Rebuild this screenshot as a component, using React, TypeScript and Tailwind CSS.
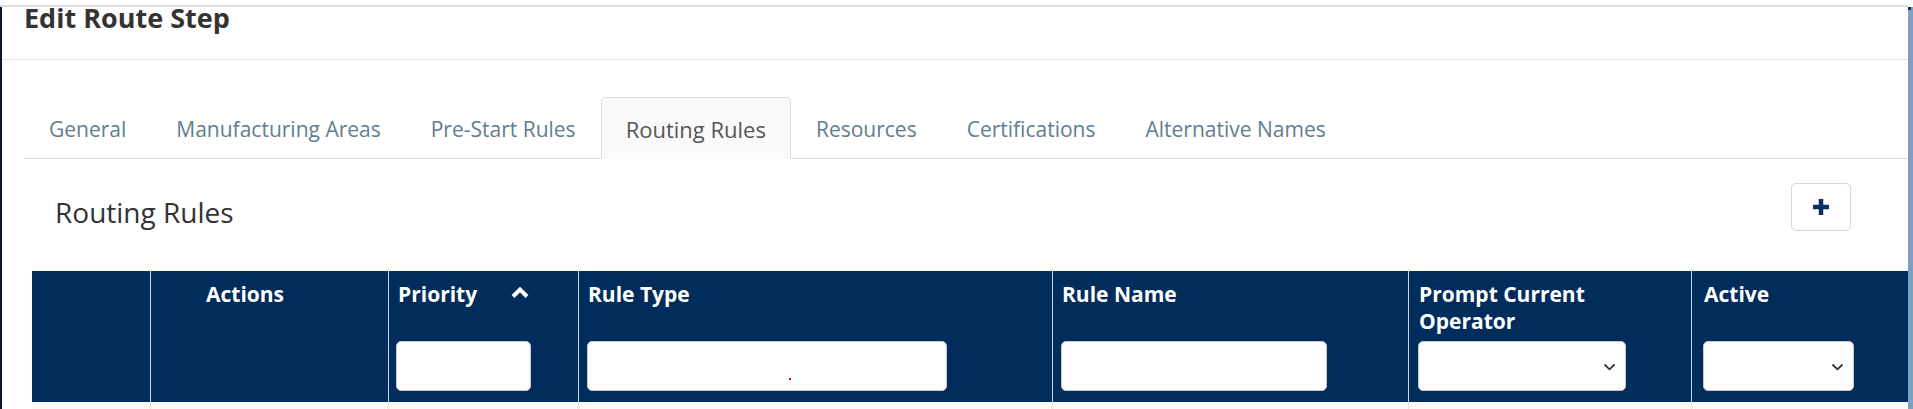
import React from "react";

const font = { fontFamily: '"Open Sans", "Liberation Sans", sans-serif' };

const tabs = [
    "General",
    "Manufacturing Areas",
    "Pre-Start Rules",
    "Routing Rules",
    "Resources",
    "Certifications",
    "Alternative Names",
];

function ChevronDown() {
    return (
        <svg width="13" height="8" viewBox="0 0 13 8" className="absolute right-[9px] top-[21px]">
            <polyline points="1.5,1.5 6.5,6.3 11.5,1.5" fill="none" stroke="#333" strokeWidth="1.8" />
        </svg>
    );
}

function TextBox({ w, dot }: { w: string; dot?: boolean }) {
    return (
        <div className={`relative h-[50px] ${w} rounded-[5px] border border-[#c8c8c8] bg-white`}>
            {/* stray red pixel seen in the reference */}
            {dot && <span className="absolute left-[201px] top-[36px] w-[2px] h-[2px] bg-[#e00000]" />}
        </div>
    );
}

function SelectBox({ w }: { w: string }) {
    return (
        <div className={`relative h-[50px] ${w} rounded-[5px] border border-[#c8c8c8] bg-white`}>
            <ChevronDown />
        </div>
    );
}

export default function App() {
    return (
        <div className="w-[1913px] h-[409px] overflow-hidden bg-white flex" style={font}>
            <div className="w-[1908px] flex flex-col">
                <div className="h-[5px] shrink-0" />
                <div className="h-[2px] shrink-0 bg-[#dcdcdc]" />
                <div className="flex-1 border-l-2 border-[#0c1a2b] flex flex-col">
                    {/* title */}
                    <div className="h-[53px] shrink-0 border-b border-[#e2e2e2] pl-[22px]">
                        <h1 className="text-[27px] leading-[22px] font-bold text-[#333]">Edit Route Step</h1>
                    </div>

                    {/* tabs */}
                    <div className="pt-[37px] pl-[22px]">
                        <div className="flex border-b border-[#dddddd]">
                            {tabs.map((t) => {
                                const active = t === "Routing Rules";
                                return (
                                    <div
                                        key={t}
                                        className={`-mb-px px-[24px] pt-[16px] pb-[14px] leading-[30px] border rounded-t-[5px] ${
                                            active
                                                ? "text-[22px] bg-[#fafafa] border-[#dddddd] border-b-[#fafafa] text-[#555]"
                                                : "text-[21px] border-transparent text-[#5f7e90]"
                                        }`}
                                    >
                                        {t}
                                    </div>
                                );
                            })}
                        </div>
                    </div>

                    {/* section */}
                    <div className="pl-[30px]">
                        <div className="flex justify-between items-start pt-[24px] pb-[40px]">
                            <h2 className="pl-[23px] mt-[11px] text-[28px] leading-[36px] text-[#333]">Routing Rules</h2>
                            <button className="mr-[57px] w-[60px] h-[48px] rounded-[5px] border border-[#d6d6d6] bg-white flex items-center justify-center">
                                <svg width="20" height="20" viewBox="0 0 20 20">
                                    <path d="M10 2v16M2 10h16" stroke="#0a3162" strokeWidth="4.5" />
                                </svg>
                            </button>
                        </div>

                        <div className="grid grid-cols-[118px_238px_190px_474px_356px_283px_1fr] bg-[#012d5d] text-white font-bold text-[21px] leading-[27px]">
                            <div className="h-[131px]" />
                            <div className="border-l border-[#d0d6de] pt-[10px] pl-[55px]">Actions</div>
                            <div className="border-l border-[#d0d6de] pt-[10px] pl-[7px] flex flex-col">
                                <div className="h-[60px] flex items-start justify-between pr-[47px] pl-[2px]">
                                    <span>Priority</span>
                                    <svg width="20" height="13" viewBox="0 0 20 13" className="mt-[5px] mr-[1px]">
                                        <polyline points="3,10.5 10,3.5 17,10.5" fill="none" stroke="white" strokeWidth="4" />
                                    </svg>
                                </div>
                                <TextBox w="w-[135px]" />
                            </div>
                            <div className="border-l border-[#d0d6de] pt-[10px] pl-[8px] flex flex-col">
                                <div className="h-[60px] pl-[1px]">Rule Type</div>
                                <TextBox w="w-[360px]" dot />
                            </div>
                            <div className="border-l border-[#d0d6de] pt-[10px] pl-[8px] flex flex-col">
                                <div className="h-[60px] pl-[1px]">Rule Name</div>
                                <TextBox w="w-[266px]" />
                            </div>
                            <div className="border-l border-[#d0d6de] pt-[10px] pl-[9px] flex flex-col">
                                <div className="h-[60px] pl-[1px]">
                                    Prompt Current
                                    <br />
                                    Operator
                                </div>
                                <SelectBox w="w-[208px]" />
                            </div>
                            <div className="border-l border-[#d0d6de] pt-[10px] pl-[11px] flex flex-col">
                                <div className="h-[60px] pl-[1px]">Active</div>
                                <SelectBox w="w-[151px]" />
                            </div>
                        </div>
                        <div className="grid grid-cols-[118px_238px_190px_474px_356px_283px_1fr] h-[20px] bg-[#f9f9f9]">
                            <div />
                            <div className="border-l border-[#e6e6e6]" />
                            <div className="border-l border-[#e6e6e6]" />
                            <div className="border-l border-[#e6e6e6]" />
                            <div className="border-l border-[#e6e6e6]" />
                            <div className="border-l border-[#e6e6e6]" />
                            <div className="border-l border-[#e6e6e6]" />
                        </div>
                    </div>
                </div>
            </div>
            {/* scrollbar edge */}
            <div className="w-[5px] mt-[7px] bg-[#7ca0c2] relative">
                <span className="absolute left-0 top-0 w-[3px] h-[3px] bg-[#1b2a3c]" />
            </div>
        </div>
    );
}
